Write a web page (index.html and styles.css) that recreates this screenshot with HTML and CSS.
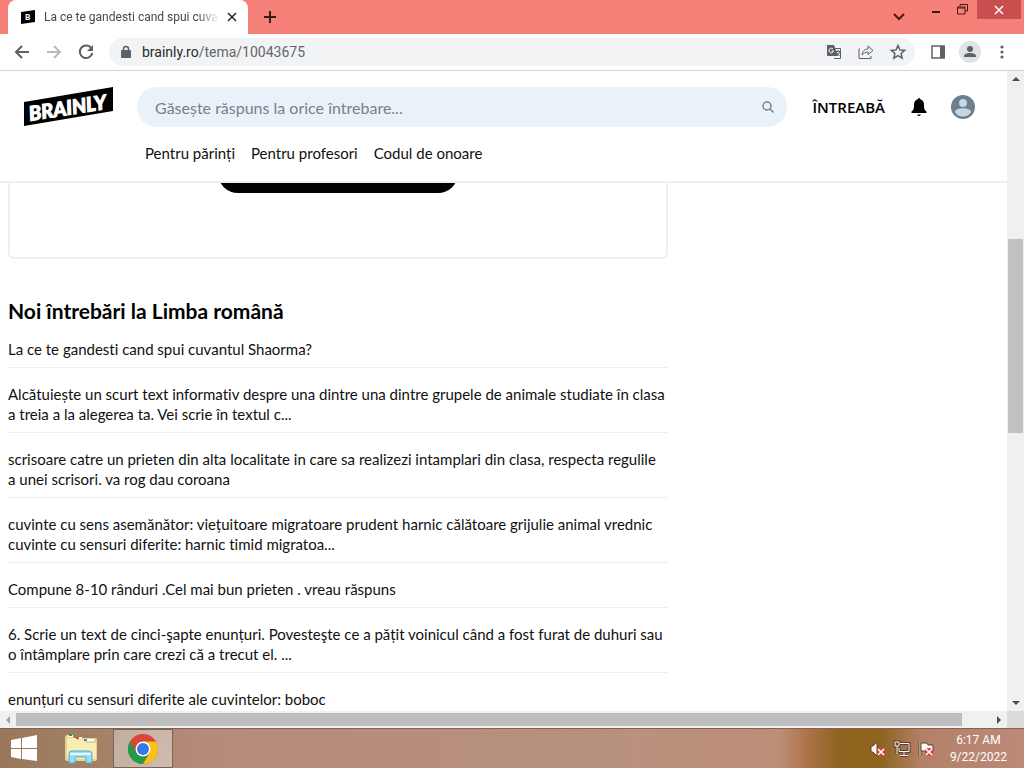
FILE: index.html
```html
<!DOCTYPE html>
<html lang="ro">
<head>
<meta charset="utf-8">
<title>La ce te gandesti cand spui cuvantul Shaorma?</title>
<link rel="stylesheet" href="styles.css">
</head>
<body>
<div class="tabstrip">
  <div class="tab">
    <svg class="favicon" width="16" height="16" viewBox="0 0 16 16"><path d="M1 3 15 1v12L1 15z"/><text x="5" y="11" class="favicon-text">B</text></svg>
    <span class="tab-title">La ce te gandesti cand spui cuvan</span>
    <button class="tab-close" aria-label="Close tab"><svg width="10" height="10" viewBox="0 0 10 10"><path d="m1 1 8 8M9 1 1 9" class="stroke mid dark"/></svg></button>
  </div>
  <button class="new-tab" aria-label="New tab"><svg width="14" height="14" viewBox="0 0 14 14"><path d="M7 1v12M1 7h12" class="stroke dark"/></svg></button>
  <div class="window-controls">
    <button class="tab-search" aria-label="Search tabs"><svg width="12" height="8" viewBox="0 0 12 8"><path d="m1 1 5 5 5-5" class="stroke maroon"/></svg></button>
    <button class="minimize" aria-label="Minimize"><svg width="10" height="10" viewBox="0 0 10 10"><path d="M1 7h8" class="stroke maroon"/></svg></button>
    <button class="restore" aria-label="Restore"><svg width="11" height="11" viewBox="0 0 11 11"><path d="M3 2.500V.5h7.500v6.500H8M.5 3h7.500v7H.5zM.5 4H8" class="stroke thin maroon"/></svg></button>
    <button class="close" aria-label="Close"><svg width="8" height="8" viewBox="0 0 8 8"><path d="m0 0 8 8M8 0 0 8" class="stroke mid white"/></svg></button>
  </div>
</div>
<div class="toolbar">
  <button aria-label="Back"><svg width="16" height="16" viewBox="0 0 16 16"><path d="M15 8H2M8 2 2 8l6 6" class="stroke gray"/></svg></button>
  <button aria-label="Forward" disabled><svg width="16" height="16" viewBox="0 0 16 16"><path d="M1 8h13M8 2l6 6-6 6" class="stroke pale"/></svg></button>
  <button aria-label="Reload"><svg width="16" height="16" viewBox="0 0 16 16"><path d="M13.500 4.500A6.300 6.300 0 1 0 14.300 9" class="stroke gray"/><path d="M15 1v6H9z" class="fill-gray"/></svg></button>
  <div class="address">
    <svg width="10" height="14" viewBox="0 0 10 14"><path d="M2.500 6V4a2.500 2.500 0 0 1 5 0v2" class="stroke mid gray"/><rect y="5" width="10" height="8" rx="1" class="fill-gray"/></svg>
    <span class="url"><span class="host">brainly.ro</span>/tema/10043675</span>
    <button aria-label="Translate"><svg width="16" height="16" viewBox="0 0 16 16"><path d="M7 4.500h7.500v10H8" class="stroke thin gray"/><path d="M1 1h7l4 11H2a1 1 0 0 1-1-1z" class="fill-gray"/><path d="M10 7.500h4M12 6v1.500M13.500 7.500q0 3-2.500 4M10.500 8.500l3 3.500" class="stroke thin gray"/><path d="M7 5a2.300 2.300 0 1 0 .5 2H5.500" class="stroke thin white"/></svg></button>
    <button aria-label="Share"><svg width="16" height="16" viewBox="0 0 16 16"><path d="M2 5H1v9.500h12V12M4 11c.5-4 2.500-6 6-6V2l5 4.500-5 4V8C7.500 8 5.500 9 4 11z" class="stroke thin gray"/></svg></button>
    <button aria-label="Bookmark"><svg width="16" height="16" viewBox="0 0 16 16"><path d="m8 1.500 1.900 4.400 4.800.5-3.600 3.100 1.100 4.700L8 11.700l-4.200 2.500 1.100-4.700-3.600-3.100 4.800-.5z" class="stroke mid gray"/></svg></button>
  </div>
  <button class="side-panel" aria-label="Side panel"><svg width="14" height="14" viewBox="0 0 14 14"><path d="M1 1h12v12H1z" class="stroke mid gray"/><path d="M9 1h5v12H9z" class="fill-gray"/></svg></button>
  <button class="profile" aria-label="Profile"><svg width="22" height="22" viewBox="0 0 22 22"><circle cx="11" cy="11" r="11" class="profile-bg"/><circle cx="11" cy="8" r="3" class="fill-gray"/><path d="M5 16v-1c0-4 12-4 12 0v1z" class="fill-gray"/></svg></button>
  <button aria-label="Menu"><svg width="4" height="14" viewBox="0 0 4 14" class="fill-gray"><circle cx="2" cy="2" r="1.600"/><circle cx="2" cy="7" r="1.600"/><circle cx="2" cy="12" r="1.600"/></svg></button>
</div>
<div class="viewport">
  <div class="page">
    <header class="site-header">
      <div class="header-row">
        <a href="#" class="logo" aria-label="Brainly"><svg width="90" height="42" viewBox="0 0 90 42"><path d="M0 16 89 1v24L0 40z"/><text x="6" y="35" transform="rotate(-9 6 35)" class="logo-text">BRAINLY</text></svg></a>
        <form class="search">
          <input type="text" aria-label="Caută" placeholder="Găsește răspuns la orice întrebare...">
          <button type="button" aria-label="Caută"><svg width="12" height="12" viewBox="0 0 12 12"><circle cx="5" cy="5" r="4" class="stroke mid slate"/><path d="m8 8 3.500 3.500" class="stroke mid slate"/></svg></button>
        </form>
        <a href="#" class="ask">ÎNTREABĂ</a>
        <button class="bell" aria-label="Notificări"><svg width="16" height="20" viewBox="0 0 16 20"><path d="M7 2a1 1 0 0 1 2 0c3 1 4 3 4 6 0 4 .5 5 2.500 6.500V16H.5v-1.500C2.500 13 3 12 3 8c0-3 1-5 4-6zM6 17.500h4q-2 3-4 0z"/></svg></button>
        <button aria-label="Cont"><svg width="24" height="24" viewBox="0 0 24 24"><circle cx="12" cy="12" r="12" class="avatar-bg"/><circle cx="12" cy="8" r="4" class="avatar-fg"/><path d="M4 17c0-5 16-5 16 0-3 6-13 6-16 0z" class="avatar-fg"/></svg></button>
      </div>
      <nav class="nav"><a href="#">Pentru părinți</a><a href="#">Pentru profesori</a><a href="#">Codul de onoare</a></nav>
    </header>
    <main class="content">
      <div class="card"><button class="pill" aria-label="Adaugă răspuns"></button></div>
      <h2>Noi întrebări la Limba română</h2>
      <ul class="questions">
        <li><a href="#">La ce te gandesti cand spui cuvantul Shaorma?</a></li>
        <li><a href="#">Alcătuiește un scurt text informativ despre una dintre una dintre grupele de animale studiate în clasa<br>a treia a la alegerea ta. Vei scrie în textul c...</a></li>
        <li><a href="#">scrisoare catre un prieten din alta localitate in care sa realizezi intamplari din clasa, respecta regulile<br>a unei scrisori. va rog dau coroana</a></li>
        <li><a href="#">cuvinte cu sens asemănător: viețuitoare migratoare prudent harnic călătoare grijulie animal vrednic<br>cuvinte cu sensuri diferite: harnic timid migratoa...</a></li>
        <li><a href="#">Compune 8-10 rânduri .Cel mai bun prieten . vreau răspuns</a></li>
        <li><a href="#">6. Scrie un text de cinci-şapte enunțuri. Povesteşte ce a pățit voinicul când a fost furat de duhuri sau<br>o întâmplare prin care crezi că a trecut el. ...</a></li>
        <li><a href="#">enunțuri cu sensuri diferite ale cuvintelor: boboc</a></li>
      </ul>
    </main>
  </div>
  <div class="vbar">
    <svg width="8" height="16" viewBox="0 0 8 16"><path d="m0 10 4-4 4 4z" class="arrow"/></svg>
    <div class="vtrack"><div class="space-above"></div><div class="vthumb"></div><div class="space-below"></div></div>
    <svg width="8" height="16" viewBox="0 0 8 16"><path d="m0 6 4 4 4-4z" class="arrow"/></svg>
  </div>
  <div class="hbar">
    <svg width="16" height="8" viewBox="0 0 16 8"><path d="M10 0 6 4l4 4z" class="arrow-off"/></svg>
    <div class="htrack"><div class="hthumb"></div></div>
    <svg width="16" height="8" viewBox="0 0 16 8"><path d="m6 0 4 4-4 4z" class="arrow"/></svg>
  </div>
  <div class="corner"></div>
</div>
<footer class="taskbar">
  <button class="start" aria-label="Start"><svg width="28" height="28" viewBox="0 0 28 28"><path d="m1 5 10-2v10H1zM12 3l15-3v13H12zM1 14h10v10L1 22zM12 14h15v12l-15-2z" fill="#fff"/></svg></button>
  <button class="explorer" aria-label="File Explorer"><svg width="34" height="30" viewBox="0 0 34 30"><path d="M1 3q0-2 2-2h5l2 3h21q2 0 2 2v19q0 2-2 2H3q-2 0-2-2z" fill="#e9d38a"/><path d="M3 4h8l2 2h7l2 3h10v16H3z" fill="#f8edb2"/><path d="M4 2h5M13 4h5M22 6h8" stroke="#fff" stroke-width="2"/><path d="M5 1h3" stroke="#259d48" stroke-width="2"/><path d="M12 4h3" stroke="#d64b39" stroke-width="2"/><path d="M20 6h3" stroke="#4a83b5" stroke-width="2"/><path d="M5 29V20q0-3 3-3h17q3 0 3 3v9h-6v-6H11v6z" fill="#9bdcf5" stroke="#4faed4"/><path d="M6 20h21" stroke="#e3faff" stroke-width="2"/></svg></button>
  <button class="chrome-app" aria-label="Google Chrome"><svg width="30" height="30" viewBox="0 0 30 30"><circle cx="15" cy="15" r="15" fill="#db4437"/><path d="M2 7.500A15 15 0 0 0 15 30l6.500-11.200L15 22l-6.500-3.200z" fill="#259b4a"/><path d="M15 30A15 15 0 0 0 28 7.500H15L21.500 19z" fill="#fbc116"/><circle cx="15" cy="15" r="7.500" fill="#fff"/><circle cx="15" cy="15" r="6" fill="#3478e5"/></svg></button>
  <div class="tray">
    <svg width="16" height="16" viewBox="0 0 16 16"><path d="M1 5h2l4-4v14l-4-4H1z" class="tray-fill"/><circle cx="11" cy="11" r="4" class="bad"/><path d="m8 8 6 6m0-6-6 6" class="cross"/></svg>
    <svg width="16" height="16" viewBox="0 0 16 16"><path d="M6 2.500h9v8H5V7M10 11v3M6 14.500h8M1 1h4v4H1zM3 5v8" class="tray-shadow"/><path d="M6 2.500h9v8H5V7M10 11v3M6 14.500h8M1 1h4v4H1zM3 5v8" class="tray-line"/></svg>
    <svg width="16" height="16" viewBox="0 0 16 16"><path d="M2 1v14" class="tray-shadow"/><path d="M2 1v14" class="tray-line"/><path d="M3 2h6l1 2h5v6H3z" class="tray-fill"/><circle cx="11" cy="11" r="4" class="bad"/><path d="m8 8 6 6m0-6-6 6" class="cross"/></svg>
    <div class="clock"><time>6:17 AM</time><time>9/22/2022</time></div>
  </div>
</footer>
</body>
</html>
```
FILE: styles.css
```css
* { box-sizing: border-box; }
body { margin: 0; height: 100vh; display: flex; flex-direction: column; overflow: hidden; background: #fff; color: #111; font-family: Roboto, "Noto Sans", sans-serif; font-variant-ligatures: none; }
button { display: flex; align-items: center; justify-content: center; padding: 0; border: 0; background: none; flex-shrink: 0; }
a { color: inherit; text-decoration: none; }
svg { display: block; flex-shrink: 0; overflow: visible; }
.stroke { fill: none; stroke-width: 2; }
.thin { stroke-width: 1; }
.mid { stroke-width: 1.5; }
.dark { stroke: #351c1c; }
.maroon { stroke: #4d1615; }
.white { stroke: #fff; }
.gray { stroke: #5d6165; }
.pale { stroke: #b9babc; }
.slate { stroke: #73818e; }
.fill-gray { fill: #5d6165; }

.tabstrip { height: 34px; flex-shrink: 0; display: flex; background: #f58077; padding-left: 8px; }
.tab { width: 240px; display: flex; align-items: center; gap: 8px; padding: 0 11px 0 12px; border-radius: 8px 8px 0 0; background: #fff; }
.favicon-text { font: 900 8px Lato, sans-serif; fill: #fff; }
.tab-title { flex: 1; overflow: hidden; white-space: nowrap; font-size: 12px; color: #45484b; mask-image: linear-gradient(90deg, #000 88%, transparent); }
.new-tab { width: 44px; }
.window-controls { margin-left: auto; display: flex; align-items: flex-start; }
.window-controls button { height: 19px; }
.window-controls .tab-search { width: 36px; height: 34px; }
.window-controls .minimize { width: 38px; }
.window-controls .restore { width: 15px; }
.window-controls .close { width: 44px; margin: 0 3px 0 7px; background: #c94f4f; }

.toolbar { height: 37px; flex-shrink: 0; display: flex; align-items: center; gap: 16px; padding: 0 20px 0 14px; border-bottom: 1px solid #d2d2d3; }
.address { flex: 1; height: 28px; display: flex; align-items: center; gap: 16px; margin-left: -1px; padding: 0 9px 0 12px; border-radius: 14px; background: #f1f3f4; }
.url { flex: 1; margin-left: -5px; font-size: 14px; color: #63666a; }
.host { color: #292b2d; }
.side-panel { margin-right: -2px; }
.profile { margin-right: 3px; }
.profile-bg { fill: #dfe3e7; }

.viewport { flex: 1; min-height: 0; display: grid; grid-template-columns: 1fr 17px; grid-template-rows: 1fr 17px; }
.page { min-height: 0; overflow: hidden; }
.site-header { padding: 16px 32px 0 24px; border-bottom: 2px solid #efefef; height: 112px; }
.header-row { display: flex; align-items: center; height: 40px; }
.search { flex: 1; display: flex; align-items: center; height: 40px; margin: 0 26px 0 23px; padding: 0 13px 0 18px; border-radius: 20px; background: #e9f1f9; }
.search input { flex: 1; min-width: 0; border: 0; padding: 0; background: none; outline: 0; font: 16px Lato, sans-serif; color: #111; }
.search input::placeholder { color: #75818d; opacity: 1; }
.logo-text { font: italic 900 20px Lato, sans-serif; fill: #fff; stroke: #fff; stroke-width: 1; }
.ask { font: 600 15px/20px "Open Sans", sans-serif; color: #000; }
.bell { margin: 0 24px 0 26px; }
.avatar-bg { fill: #6d7f8f; }
.avatar-fg { fill: #c5d7e5; }
.nav { display: flex; gap: 16px; margin: 16px 0 0 121px; font: 15px/20px Lato, sans-serif; }
.content { width: 66%; max-width: 660px; margin-left: 8px; font-family: Lato, sans-serif; }
.card { height: 76px; border: 2px solid #f0f0f1; border-top: 0; border-radius: 0 0 6px 6px; overflow: hidden; display: flex; align-items: flex-end; justify-content: center; padding-bottom: 64px; }
.pill { width: 240px; height: 40px; border-radius: 20px; background: #000; }
h2 { margin: 40px 0 0; font-size: 21px; line-height: 24px; color: #000; }
.questions { list-style: none; margin: 0; padding: 0; font-size: 15px; line-height: 20px; white-space: nowrap; }
.questions li { padding: 16px 0 8px; border-bottom: 1px solid #eceef0; }
.vbar { display: flex; flex-direction: column; align-items: center; background: #f0f0f0; }
.vtrack { flex: 1; align-self: stretch; display: flex; flex-direction: column; padding: 0 1px; }
.space-above { flex: 152; }
.vthumb { flex: 194; background: #c1c1c1; }
.space-below { flex: 262; }
.hbar { display: flex; align-items: center; background: #f0f0f0; }
.htrack { flex: 1; height: 13px; }
.hthumb { width: 97%; height: 100%; background: #bdbdbd; }
.corner { background: #dcdcdc; }
.arrow { fill: #4c4c4c; }
.arrow-off { fill: #a3a3a3; }

.taskbar { height: 40px; flex-shrink: 0; display: flex; align-items: center; padding-right: 17px; border-top: 1px solid #806350; background: linear-gradient(90deg, #987859 0, #a6836a 12%, #b68b7c 20%, #b8917e 60%, #bd8e78 76%, #ad7147 79%, #8e641f 82%, #8e641f 86%, #b48068 90%, #bb8a79 100%); }
.start { width: 48px; }
.explorer { width: 65px; }
.chrome-app { width: 60px; height: 39px; border: 1px solid #f6e9df; background: linear-gradient(120deg, #c2ae9f, #cfbbb0); outline: 1px solid #80604e; outline-offset: -1px; }
.tray { margin-left: auto; display: flex; align-items: center; gap: 8px; }
.tray-fill { fill: #fff9ed; stroke: #5f4030; }
.tray-shadow { fill: none; stroke: #5f4030; stroke-width: 3; }
.tray-line { fill: none; stroke: #fff4e7; stroke-width: 1; }
.bad { fill: #d44343; }
.cross { stroke: #fff; stroke-width: 1.5; }
.clock { display: flex; flex-direction: column; align-items: center; margin-left: 8px; color: #fff; font-size: 12px; line-height: 17px; }
```
